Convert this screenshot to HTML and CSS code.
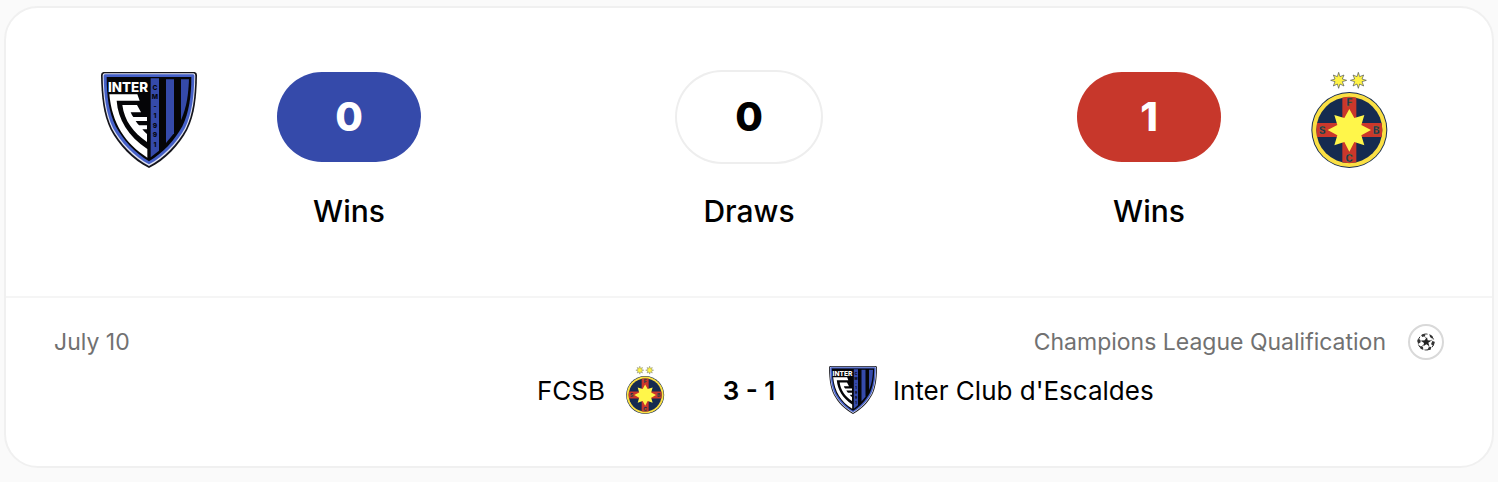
FILE: index.html
```html
<!DOCTYPE html>
<html lang="en">
<head>
  <meta charset="UTF-8" />
  <meta name="viewport" content="width=device-width, initial-scale=1.0"/>
  <title>Head to head</title>
  <link rel="stylesheet" href="styles.css">
</head>
<body>
  <main class="card">
    <section class="summary">
      <svg class="crest" viewBox="33 36 288 288" role="img" aria-label="Inter Club d'Escaldes">
        <g id="crest-inter">
          <path d="M40 36H314Q321 37 321 45C320 110 314 165 292 209C268 255 225 300 177 324C129 300 86 255 62 209C40 165 34 110 33 45Q33 37 40 36Z" fill="#15151c"/>
          <path d="M43 40H311Q316 41 316 47C315 110 309 162 288 206C264 251 222 294 177 318C132 294 90 251 66 206C45 162 39 110 38 47Q38 41 43 40Z" fill="#dfe2f3"/>
          <path d="M45 43H309Q313 44 313 48C312 110 306 160 285 204C261 248 220 290 177 313C134 290 93 248 69 204C48 160 42 110 41 48Q41 44 45 43Z" fill="#4560c8"/>
          <path d="M50 51H304C304 108 297 158 277 199C255 240 218 280 177 304C136 280 99 240 77 199C57 158 50 108 50 51Z" fill="#050507"/>
          <path d="M182 55H207V272L182 292Z" fill="#354aaa"/>
          <path d="M228 58H252V220L228 249Z" fill="#354aaa"/>
          <path d="M273 58H297C295 103 291 139 273 181Z" fill="#354aaa"/>
          <path d="M58 103H142L149 122H80C84 178 114 228 172 267V293C105 250 66 190 58 103Z" fill="#fff"/>
          <path d="M97 135H141L153 157H122C125 164 127 168 130 171H171V183H137C140 188 143 192 147 196H171V208H157L165 217L171 222V246C130 218 103 182 97 135Z" fill="#fff"/>
          <text class="crest-name" x="54" y="96">INTER</text>
          <g class="crest-year">
            <text x="195" y="89">C</text>
            <text x="195" y="118">M</text>
            <text x="195" y="145">-</text>
            <text x="195" y="174">1</text>
            <text x="195" y="203">9</text>
            <text x="195" y="232">9</text>
            <text x="195" y="261">1</text>
          </g>
        </g>
      </svg>
      <div class="stats">
        <div class="stat"><span class="pill home">0</span><span class="label">Wins</span></div>
        <div class="stat"><span class="pill draw">0</span><span class="label">Draws</span></div>
        <div class="stat"><span class="pill away">1</span><span class="label">Wins</span></div>
      </div>
      <svg class="crest" viewBox="18 36 288 288" role="img" aria-label="FCSB">
        <g id="crest-fcsb">
          <g fill="#fff345" stroke="#4b5258" stroke-width="2">
            <path id="mini-star" d="M131 37L135 50L147 45L142 57L155 61L142 65L147 78L135 72L131 85L127 72L115 78L120 65L107 61L120 57L115 45L127 50Z"/>
            <use href="#mini-star" x="59"/>
          </g>
          <circle cx="163" cy="210" r="114" fill="#172c50"/>
          <circle cx="163" cy="210" r="111" fill="#fbe044"/>
          <circle cx="163" cy="210" r="99" fill="#152b50"/>
          <path d="M142 113Q163 108 184 113V189H260Q264 210 260 231H184V307Q163 312 142 307V231H66Q62 210 66 189H142Z" fill="#cb372b"/>
          <path d="M163 147L178 174L208 165L199 195L228 210L199 226L208 256L178 246L163 275L148 246L118 256L127 226L98 210L127 195L118 165L148 174Z" fill="#fff64a"/>
          <g class="crest-letters">
            <text x="163" y="137">F</text>
            <text x="82" y="221">S</text>
            <text x="244" y="221">B</text>
            <text x="163" y="305">C</text>
          </g>
        </g>
      </svg>
    </section>

    <section class="match">
      <div class="match-info">
        <span>July 10</span>
        <div class="league">
          <span>Champions League Qualification</span>
          <span class="league-icon">
            <svg viewBox="0 0 54 54" aria-hidden="true">
              <circle cx="27" cy="27" r="24" fill="none" stroke="#333" stroke-width="3" stroke-dasharray="17 8"/>
              <path d="M29 18L20 7M36 25L46 21M33 35L38 44M20 35L12 42M19 23L8 24" stroke="#555" stroke-width="2"/>
              <path fill="#222" d="M30 13L32 22L42 23L34 29L37 39L28 34L19 40L21 30L13 24L23 22Z"/>
              <path fill="#333" d="M12 6L23 3L25 9L16 12ZM37 3L47 10L46 17L39 12ZM1 20L9 19L11 28L3 33ZM53 26L46 24L42 34L50 38ZM9 39L18 41L19 51L11 47ZM35 43L43 41L41 50L31 52Z"/>
            </svg>
          </span>
        </div>
      </div>
      <div class="match-row">
        <div class="team team-home">
          <span>FCSB</span>
          <svg class="crest-small" viewBox="18 36 288 288" aria-hidden="true"><use href="#crest-fcsb"/></svg>
        </div>
        <span class="score">3 - 1</span>
        <div class="team">
          <svg class="crest-small" viewBox="33 36 288 288" aria-hidden="true"><use href="#crest-inter"/></svg>
          <span>Inter Club d'Escaldes</span>
        </div>
      </div>
    </section>
  </main>
</body>
</html>
```

FILE: styles.css
```css
:root {
  --bg-color: #fafafa;
  --card-bg: #fff;
  --border-color: #f0f0f0;
  --home: #354aaa;
  --away: #c7372b;
  --muted: #717171;
}
* {
  margin: 0;
  padding: 0;
  box-sizing: border-box;
}
body {
  padding: 6px 4px 14px;
  font-family: 'Inter', sans-serif;
  background: var(--bg-color);
  color: #000;
}
.card {
  background: var(--card-bg);
  border: 2px solid var(--border-color);
  border-radius: 34px;
}
.summary {
  display: flex;
  align-items: flex-start;
  gap: 80px;
  padding: 64px 95px;
  border-bottom: 2px solid #f5f5f5;
}
.crest {
  flex: none;
  width: 96px;
  height: 96px;
}
.stats {
  display: flex;
  flex: 1;
  justify-content: space-between;
}
.stat {
  display: flex;
  flex-direction: column;
  align-items: center;
  gap: 28px;
  width: 144px;
}
.pill {
  width: 100%;
  border-radius: 48px;
  font-size: 40px;
  font-weight: 800;
  line-height: 90px;
  text-align: center;
}
.home {
  background: var(--home);
  color: #fff;
}
.draw {
  box-shadow: 0 0 0 2px #eee;
}
.away {
  background: var(--away);
  color: #fff;
}
.label {
  font-size: 30px;
  font-weight: 500;
  line-height: 42px;
}
.match {
  padding: 26px 48px 52px;
}
.match-info {
  display: flex;
  align-items: center;
  justify-content: space-between;
  font-size: 23px;
  line-height: 36px;
  color: var(--muted);
}
.league {
  display: flex;
  align-items: center;
  gap: 22px;
}
.league-icon {
  display: flex;
  align-items: center;
  justify-content: center;
  width: 36px;
  height: 36px;
  border: 2px solid #d9d9d9;
  border-radius: 50%;
}
.league-icon svg {
  width: 18px;
  height: 18px;
}
.match-row {
  display: grid;
  grid-template-columns: 1fr 160px 1fr;
  align-items: center;
  margin-top: 6px;
  font-size: 26px;
}
.team {
  display: flex;
  align-items: center;
  gap: 16px;
}
.team-home {
  justify-content: flex-end;
}
.crest-small {
  width: 48px;
  height: 48px;
}
.score {
  font-weight: 600;
  text-align: center;
}
.crest-name {
  font: 800 40px 'Inter', sans-serif;
  fill: #fff;
}
.crest-year {
  font: 800 20px 'Inter', sans-serif;
  fill: #05060f;
  text-anchor: middle;
}
.crest-letters {
  font: 800 30px 'Inter', sans-serif;
  fill: #152b50;
  stroke: #8d7b35;
  stroke-width: 1px;
  text-anchor: middle;
}
```
